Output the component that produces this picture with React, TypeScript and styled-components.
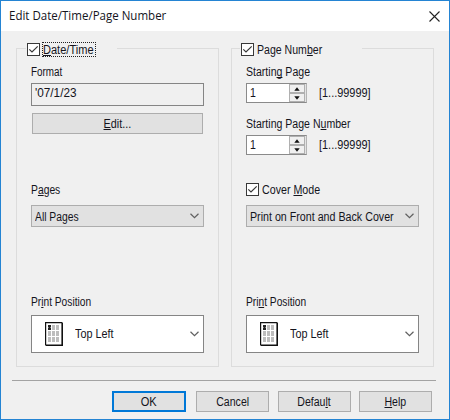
import React from 'react';
import styled, { createGlobalStyle, css } from 'styled-components';

const Global = createGlobalStyle`
  * { box-sizing: border-box; }
  body { margin: 0; }
  svg { flex: none; display: block; }
  u { text-decoration-thickness: 1px; text-underline-offset: 1px; text-decoration-skip-ink: none; }
`;

const Dialog = styled.div`
  width: 450px;
  height: 420px;
  display: flex;
  flex-direction: column;
  background: #f0f0f0;
  border: 1px solid #2484d3;
  font: 12px/14px 'Liberation Sans', sans-serif;
  color: #14141c;
  overflow: hidden;
`;

const TitleBar = styled.header`
  height: 30px;
  padding: 0 9px 0 8px;
  display: flex;
  align-items: center;
  justify-content: space-between;
  background: #fff;
`;

/* The dialog face is condensed, so labels are narrowed horizontally. */
const Text = styled.span<{ $scale?: number; $center?: boolean }>`
  display: inline-block;
  white-space: nowrap;
  transform: scaleX(${(p) => p.$scale ?? 0.88});
  transform-origin: ${(p) => (p.$center ? 'center' : 'left')};
`;

const Title = styled(Text)`
  font-family: 'Open Sans', sans-serif;
  line-height: 16px;
`;

const Groups = styled.main`
  display: flex;
  gap: 12px;
  padding: 17px 0 0 15px;
`;

const Group = styled.section`
  width: 203px;
  height: 319px;
  border: 1px solid #dcdcdc;
  padding: 0 14px;
`;

const Legend = styled.div<{ $width: number; $shift: number }>`
  width: ${(p) => p.$width}px;
  height: 15px;
  margin: -7px 0 0 ${(p) => p.$shift}px;
  padding-left: 1px;
  background: #f0f0f0;
`;

const CheckRow = styled.label`
  display: flex;
  align-items: center;
  height: 15px;
  gap: 2px;
`;

const Caption = styled.div<{ $top: number }>`
  margin-top: ${(p) => p.$top}px;
  height: 14px;
`;

const CheckText = styled.span<{ $focused?: boolean }>`
  display: block;
  height: 15px;
  padding: 1px 0 0 1px;
  ${(p) => p.$focused && css`
    width: 54px;
    outline: 1px dotted #222;
    outline-offset: -1px;
  `}
`;

const Field = styled.div`
  height: 23px;
  margin-top: 4px;
  padding: 2px 3px;
  border: 1px solid #858585;
`;

const Button = styled.button<{ $primary?: boolean; $wide?: boolean }>`
  display: flex;
  align-items: center;
  justify-content: center;
  width: ${(p) => (p.$wide ? '171px' : '73px')};
  height: 21px;
  padding: 0;
  background: #e1e1e1;
  border: ${(p) => (p.$primary ? '2px solid #0078d7' : '1px solid #adadad')};
  color: inherit;
  font: inherit;
  ${(p) => p.$wide && css`margin: 7px 0 0 1px;`}
  ${(p) => p.$primary && css`width: 74px; margin-right: 1.5px;`}
`;

const Combo = styled.div<{ $tall?: boolean; $top: number }>`
  display: flex;
  align-items: center;
  justify-content: space-between;
  height: ${(p) => (p.$tall ? 38 : 22)}px;
  margin-top: ${(p) => p.$top}px;
  padding: 0 4px 0 ${(p) => (p.$tall ? 13 : 3)}px;
  background: ${(p) => (p.$tall ? '#fff' : '#e1e1e1')};
  border: 1px solid ${(p) => (p.$tall ? '#858585' : '#adadad')};
`;

const ComboText = styled.span`
  width: 152px;
  padding-top: 1px;
`;

const Choice = styled.span`
  display: flex;
  align-items: center;
  gap: 12px;
`;

const SpinRow = styled.div`
  display: flex;
  align-items: center;
  height: 20px;
  margin-top: 4px;
  gap: 12px;
`;

const Spin = styled.div`
  display: flex;
  width: 61px;
  height: 20px;
  background: #fff;
  border: 1px solid #8a8a8a;
  border-right-color: #b4b4b4;
`;

const SpinValue = styled.span`
  flex: 1;
  padding: 2px 3px;
`;

const Arrows = styled.span`
  width: 17px;
  padding-right: 1px;
  background: #e4e4e4;
  display: flex;
  flex-direction: column;
`;

const Arrow = styled.span`
  flex: 1;
  display: flex;
  align-items: center;
  justify-content: center;
  background: #f0f0f0;
  border: 1px solid #b0b0b0;
`;

const Divider = styled.hr`
  width: 424px;
  height: 1px;
  margin: 13px 0 0 11px;
  border: 0;
  background: #a3a3a3;
`;

const Actions = styled.footer`
  display: flex;
  gap: 8.5px;
  margin: 10px 0 0 111px;
`;

const CheckBox = () => (
  <svg width="13" height="13" viewBox="0 0 13 13">
    <rect x=".5" y=".5" width="12" height="12" fill="#fff" stroke="#383838" />
    <path d="M2.3 6.3 5 9l5.7-5.7" fill="none" stroke="#383838" strokeWidth="1.2" />
  </svg>
);

const Chevron = () => (
  <svg width="9" height="6" viewBox="0 0 9 6">
    <path d="M.5.7 4.5 4.6 8.5.7" fill="none" stroke="#606060" strokeWidth="1.2" />
  </svg>
);

const Triangle = ({ down }: { down?: boolean }) => (
  <svg width="6" height="4" viewBox="0 0 6 4">
    <path d={down ? 'M.3.3h5.4L3 3.7z' : 'M.3 3.7h5.4L3 .3z'} fill="#111" />
  </svg>
);

const PositionIcon = () => (
  <svg width="18" height="24" viewBox="0 0 18 24">
    <path d="M1 1h16v22H1z" fill="#fff" />
    <path d="M.6 23V.6H17" fill="none" stroke="#111" strokeWidth="1.2" />
    <path d="M17.2.5V23.2H.5" fill="none" stroke="#111" strokeWidth="1.6" />
    {[3, 9, 15].map((y) =>
      [3, 7, 11].map((x) => (
        <rect key={`${x}-${y}`} x={x} y={y} width="3" height="5" fill={x === 3 && y === 3 ? '#222' : '#bdbdbd'} />
      )),
    )}
    <path d="M3 5h1v1H3zM5 5h1v1H5z" fill="#777" />
  </svg>
);

const Spinner = () => (
  <SpinRow>
    <Spin>
      <SpinValue><Text>1</Text></SpinValue>
      <Arrows>
        <Arrow><Triangle /></Arrow>
        <Arrow><Triangle down /></Arrow>
      </Arrows>
    </Spin>
    <Text $scale={0.91}>[1...99999]</Text>
  </SpinRow>
);

const PositionCombo = () => (
  <Combo $tall $top={6}>
    <Choice>
      <PositionIcon />
      <Text $scale={0.9}>Top Left</Text>
    </Choice>
    <Chevron />
  </Combo>
);

export default function App() {
  return (
    <>
      <Global />
      <Dialog>
        <TitleBar>
          <Title $scale={0.96}>Edit Date/Time/Page Number</Title>
          <svg width="11" height="11" viewBox="0 0 11 11">
            <path d="m.5.5 10 10m0-10-10 10" stroke="#222" strokeWidth="1.1" />
          </svg>
        </TitleBar>
        <Groups>
          <Group>
            <Legend $width={91} $shift={-5}>
              <CheckRow>
                <CheckBox />
                <CheckText $focused><Text $scale={0.92}><u>D</u>ate/Time</Text></CheckText>
              </CheckRow>
            </Legend>
            <Caption $top={8}><Text $scale={0.82}>Format</Text></Caption>
            <Field><Text $scale={0.98}>'07/1/23</Text></Field>
            <Button $wide><Text $center $scale={0.9}><u>E</u>dit...</Text></Button>
            <Caption $top={49}><Text $scale={0.86}>P<u>a</u>ges</Text></Caption>
            <Combo $top={8}><ComboText><Text $scale={0.86}>All Pages</Text></ComboText><Chevron /></Combo>
            <Caption $top={68}><Text $scale={0.85}>Pr<u>i</u>nt Position</Text></Caption>
            <PositionCombo />
          </Group>
          <Group>
            <Legend $width={122} $shift={-6}>
              <CheckRow>
                <CheckBox />
                <CheckText><Text>Page Num<u>b</u>er</Text></CheckText>
              </CheckRow>
            </Legend>
            <Caption $top={8}><Text>Startin<u>g</u> Page</Text></Caption>
            <Spinner />
            <Caption $top={14}><Text>Starting Page N<u>u</u>mber</Text></Caption>
            <Spinner />
            <Caption $top={27}>
              <CheckRow>
                <CheckBox />
                <CheckText><Text $scale={0.89}>Cover <u>M</u>ode</Text></CheckText>
              </CheckRow>
            </Caption>
            <Combo $top={9}><ComboText><Text $scale={0.89}>Print on Front and Back Cover</Text></ComboText><Chevron /></Combo>
            <Caption $top={68}><Text $scale={0.85}>Pri<u>n</u>t Position</Text></Caption>
            <PositionCombo />
          </Group>
        </Groups>
        <Divider />
        <Actions>
          <Button $primary><Text $center $scale={0.92}>OK</Text></Button>
          <Button><Text $center>Cancel</Text></Button>
          <Button><Text $center>Defau<u>l</u>t</Text></Button>
          <Button><Text $center><u>H</u>elp</Text></Button>
        </Actions>
      </Dialog>
    </>
  );
}
